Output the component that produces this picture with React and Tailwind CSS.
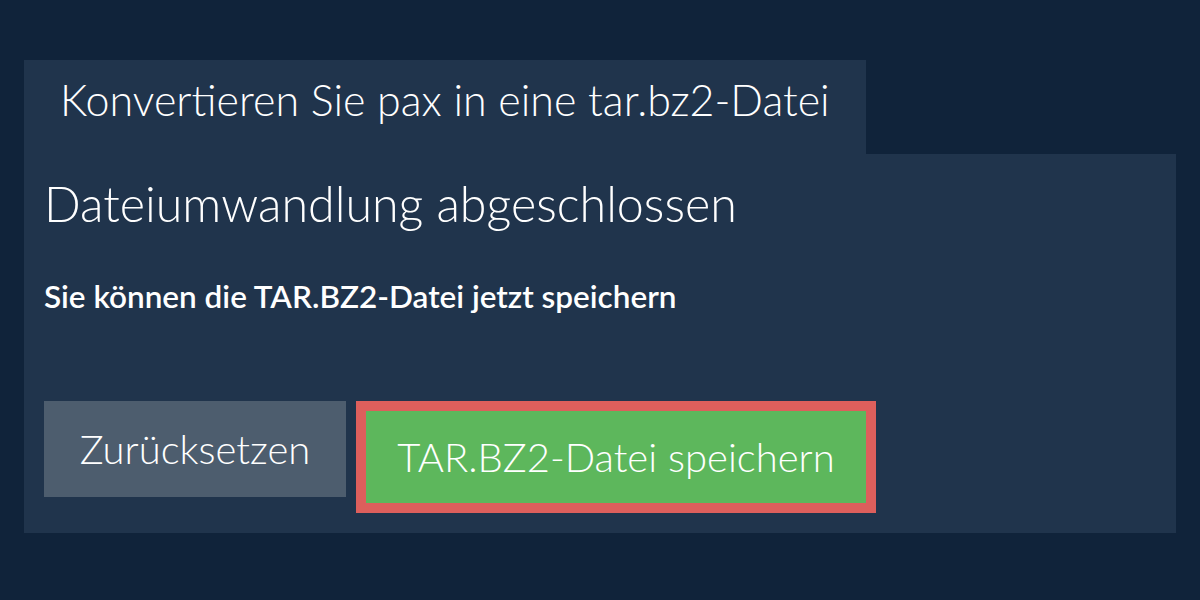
export default function App() {
  return (
    <div
      className="min-h-[600px] w-full bg-[#10233a] px-6 pt-[60px] text-white"
      style={{ fontFamily: "Lato, 'Noto Sans', sans-serif" }}
    >
      <div className="flex">
        <div className="h-[94px] bg-[#20344c] px-9 pt-[18px]">
          <h1 className="text-[43px] font-light leading-none">Konvertieren Sie pax in eine tar.bz2-Datei</h1>
        </div>
      </div>

      <div className="bg-[#20344c] px-5 pb-5 pt-[19px]">
        <h2 className="text-[48.4px] font-light leading-[60px]">Dateiumwandlung abgeschlossen</h2>
        <p className="mt-[45px] text-[31.5px] font-semibold leading-9">Sie können die TAR.BZ2-Datei jetzt speichern</p>

        <div className="mt-[87px] flex items-start gap-[10px]">
          <button
            type="button"
            className="h-[96px] w-[302px] bg-[#4d5d6e] text-[40px] font-light text-white"
          >
            Zurücksetzen
          </button>
          <div className="border-[10px] border-[#dd5f5c]">
            <button
              type="button"
              className="h-[92px] w-[500px] bg-[#5db75c] text-[40px] font-light text-white"
            >
              TAR.BZ2-Datei speichern
            </button>
          </div>
        </div>
      </div>
    </div>
  );
}
